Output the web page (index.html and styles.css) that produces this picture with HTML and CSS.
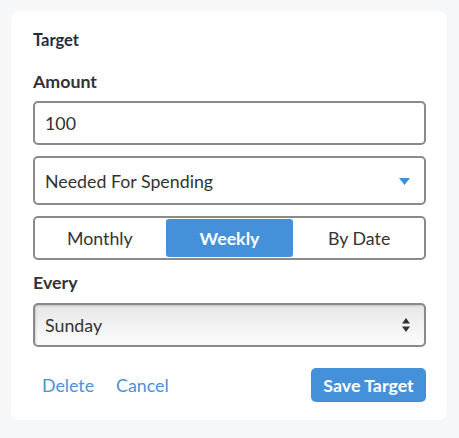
FILE: index.html
```html
<!DOCTYPE html>
<html>
<head>
<meta charset="utf-8">
<link rel="stylesheet" href="styles.css">
</head>
<body>
<div class="card">
  <div class="title">Target</div>
  <div class="label label-amount">Amount</div>
  <div class="field input">100</div>
  <div class="field dropdown">
    <span>Needed For Spending</span>
    <svg class="caret" width="11" height="7" viewBox="0 0 11 7"><path d="M0 0H11L5.5 7Z" fill="#3f8fd8"/></svg>
  </div>
  <div class="segmented">
    <div class="seg">Monthly</div>
    <div class="seg active">Weekly</div>
    <div class="seg">By Date</div>
  </div>
  <div class="label label-every">Every</div>
  <div class="field native">
    <span>Sunday</span>
    <svg class="updown" width="8" height="14" viewBox="0 0 8 14"><path d="M4 0L8 5.5H0Z M4 14L8 8.5H0Z" fill="#333"/></svg>
  </div>
  <div class="actions">
    <a class="link">Delete</a>
    <a class="link">Cancel</a>
    <span class="spacer"></span>
    <button class="save">Save Target</button>
  </div>
</div>
</body>
</html>
```
FILE: styles.css
```css
html, body {
  margin: 0;
  padding: 0;
  background: #f6f7f9;
}
body {
  padding: 11px 12px 0 11px;
  font-family: Lato, "Open Sans", sans-serif;
  color: #333;
}
.card {
  background: #fff;
  border-radius: 8px;
  padding: 20px 21px 18px 22px;
  display: flex;
  flex-direction: column;
}
.title {
  font-size: 16.5px;
  font-weight: 700;
  line-height: 18px;
  color: #1f2e42;
}
.label {
  font-size: 17.8px;
  font-weight: 700;
  line-height: 20px;
  color: #333;
}
.label-amount { margin-top: 22px; }
.label-every { margin-top: 12px; }
.field {
  box-sizing: border-box;
  border: 2px solid #8a8a8a;
  border-radius: 5px;
  display: flex;
  align-items: center;
  padding: 0 14px 0 10px;
  font-size: 17.8px;
  color: #333;
}
.input {
  margin-top: 10px;
  height: 44px;
}
.dropdown {
  margin-top: 11px;
  height: 49px;
  justify-content: space-between;
}
.caret { margin-top: 2px; }
.segmented {
  margin-top: 11px;
  box-sizing: border-box;
  height: 44px;
  border: 2px solid #8a8a8a;
  border-radius: 5px;
  padding: 1px;
  display: grid;
  grid-template-columns: 1fr 1fr 1fr;
  gap: 2px;
}
.seg {
  display: flex;
  align-items: center;
  justify-content: center;
  font-size: 17.8px;
  color: #333;
  border-radius: 3px;
}
.seg.active {
  background: #4591d9;
  color: #fff;
  font-weight: 700;
}
.native {
  margin-top: 11px;
  height: 44px;
  justify-content: space-between;
  padding-right: 14px;
  background: linear-gradient(#e6e6e6, #f3f3f3 55%, #fbfbfb);
  box-shadow: inset 1px 1px 2px rgba(0,0,0,0.15);
}
.actions {
  margin-top: 21px;
  display: flex;
  align-items: center;
  height: 34px;
  padding-left: 9px;
  gap: 22px;
}
.link {
  font-size: 17.8px;
  color: #4a92d6;
}
.spacer { flex: 1; }
.save {
  height: 34px;
  width: 115px;
  border: none;
  border-radius: 5px;
  background: #4591d9;
  color: #fff;
  font-family: Lato, sans-serif;
  font-size: 17.8px;
  font-weight: 700;
  padding: 0;
}
```
